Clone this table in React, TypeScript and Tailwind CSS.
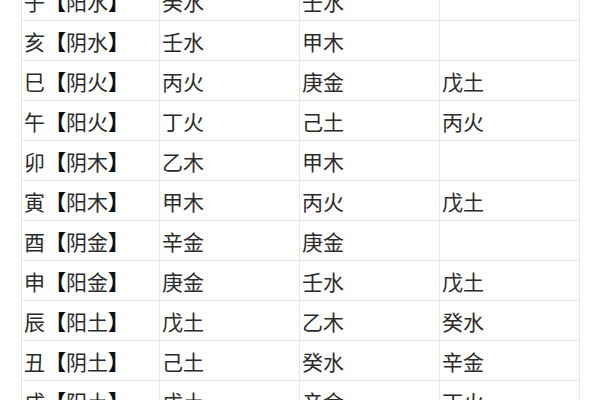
import React from "react";

const rows: string[][] = [
  ["子", "阳水", "癸水", "壬水", ""],
  ["亥", "阴水", "壬水", "甲木", ""],
  ["巳", "阴火", "丙火", "庚金", "戊土"],
  ["午", "阳火", "丁火", "己土", "丙火"],
  ["卯", "阴木", "乙木", "甲木", ""],
  ["寅", "阳木", "甲木", "丙火", "戊土"],
  ["酉", "阴金", "辛金", "庚金", ""],
  ["申", "阳金", "庚金", "壬水", "戊土"],
  ["辰", "阳土", "戊土", "乙木", "癸水"],
  ["丑", "阴土", "己土", "癸水", "辛金"],
  ["戌", "阳土", "戊土", "辛金", "丁火"],
];

export default function App() {
  return (
    <div
      className="w-[600px] h-[400px] overflow-hidden bg-white"
      style={{ fontFamily: '"Noto Sans CJK SC", "Noto Sans", sans-serif' }}
    >
      <div className="ml-[21px] mt-[-19px] w-[559px] border-l border-[#e3e3e3]">
        {rows.map((r, i) => (
          <div
            key={i}
            className="grid grid-cols-[138px_140px_140px_140px] h-[40px] border-b border-[#e6e6e6]"
          >
            <div className="flex items-center pl-[2px] pt-[2px] border-r border-[#e6e6e6] text-[21px] leading-none text-[#2a2a2a]">
              {r[0]}
              <span className="font-black text-[#111]">【</span>
              {r[1]}
              <span className="font-black text-[#111]">】</span>
            </div>
            {r.slice(2).map((c, j) => (
              <div
                key={j}
                className="flex items-center pl-[2px] pt-[2px] border-r border-[#e6e6e6] text-[21px] leading-none text-[#2a2a2a]"
              >
                {c}
              </div>
            ))}
          </div>
        ))}
      </div>
    </div>
  );
}
